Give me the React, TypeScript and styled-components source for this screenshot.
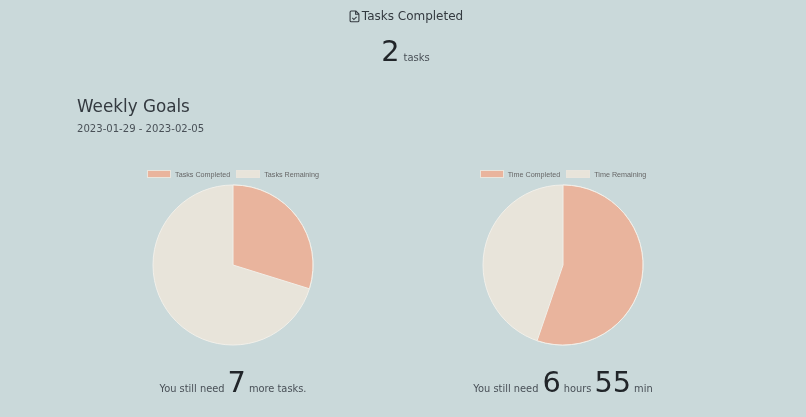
import styled, { createGlobalStyle } from "styled-components";

const GlobalStyle = createGlobalStyle`
    html, body {
        margin: 0;
        padding: 0;
        height: 100%;
        background-color: #cad9da;
    }
    body {
        font-family: "DejaVu Sans", Verdana, sans-serif;
        color: #212529;
        overflow: hidden;
    }
`;

const Page = styled.div`
    width: 806px;
    height: 417px;
    overflow: hidden;
    filter: blur(0.3px);
`;

const Completed = styled.section`
    display: flex;
    flex-direction: column;
    align-items: center;
    padding-top: 8px;
`;

const CompletedTitle = styled.h2`
    display: flex;
    align-items: center;
    margin: 0;
    padding-left: 6px;
    height: 16px;
    font-size: 12px;
    font-weight: 400;
    line-height: 16px;
    color: #343a40;
`;

const TitleIcon = styled.svg`
    width: 11px;
    height: 13px;
    margin-right: 2px;
`;

const Amount = styled.div`
    display: flex;
    align-items: baseline;
    height: 38px;
    margin-top: 8px;
    padding-left: 5px;
`;

const BigNumber = styled.span<{ $left?: number; $right?: number }>`
    font-size: 28.8px;
    line-height: 38px;
    color: #212529;
    margin: 0 ${(props) => props.$right ?? 0}px 0 ${(props) => props.$left ?? 0}px;
`;

const Unit = styled.span`
    font-size: 10px;
    color: #495057;
    margin-left: 4px;
`;

const Goals = styled.section`
    padding: 24px 0 0 77px;
`;

const GoalsTitle = styled.h1`
    margin: 0;
    font-size: 16.8px;
    font-weight: 400;
    line-height: 24px;
    color: #343a40;
`;

const GoalsDates = styled.p`
    margin: 4px 0 0;
    font-size: 10.08px;
    line-height: 14px;
    color: #495057;
`;

const Charts = styled.section`
    display: grid;
    grid-template-columns: 330px 330px;
    margin: 33px 0 0 68px;
`;

const ChartColumn = styled.div`
    display: flex;
    flex-direction: column;
    align-items: center;
`;

const Legend = styled.div`
    display: flex;
    align-items: center;
    justify-content: center;
    gap: 6px;
    height: 10px;
    font-family: "Liberation Sans", Arial, sans-serif;
    font-size: 7.2px;
    color: #666;
`;

const LegendItem = styled.div`
    display: flex;
    align-items: center;
    gap: 4px;
`;

const Swatch = styled.span<{ $color: string }>`
    width: 24px;
    height: 8px;
    box-sizing: border-box;
    border: 1px solid #e9e5dd;
    background-color: ${(props) => props.$color};
`;

const Pie = styled.svg`
    display: block;
    width: 162px;
    height: 162px;
    margin-top: 5px;
`;

const Remaining = styled.div`
    display: flex;
    align-items: baseline;
    justify-content: center;
    height: 38px;
    margin-top: 17px;
    font-size: 9.85px;
    color: #495057;
`;

const PEACH = "#e9b49d";
const CREAM = "#e8e4da";

function PieChart({ percent }: { percent: number }) {
    // slice starts at 12 o'clock and goes clockwise, like the chart lib does
    const angle = percent * 2 * Math.PI;
    const x = 81 + 80 * Math.sin(angle);
    const y = 81 - 80 * Math.cos(angle);
    const large = percent > 0.5 ? 1 : 0;
    return (
        <Pie viewBox="0 0 162 162">
            <circle cx="81" cy="81" r="80" fill={CREAM} stroke="#f1efe9" />
            <path
                d={`M81 81 L81 1 A80 80 0 ${large} 1 ${x} ${y} Z`}
                fill={PEACH}
                stroke="#f1efe9"
            />
        </Pie>
    );
}

function App() {
    return (
        <Page>
            <GlobalStyle />
            <Completed>
                <CompletedTitle>
                    <TitleIcon viewBox="0 0 12 14" fill="none" stroke="#343a40" strokeWidth="1.2">
                        <path d="M2.5 1h5L10.8 4.3V11.5a1.3 1.3 0 0 1-1.3 1.3h-7a1.3 1.3 0 0 1-1.3-1.3V2.3A1.3 1.3 0 0 1 2.5 1z" />
                        <path d="M7.2 1v3.5h3.6" />
                        <path d="M3.6 8.6l1.7 1.7 3-3" />
                    </TitleIcon>
                    Tasks Completed
                </CompletedTitle>
                <Amount>
                    <BigNumber>2</BigNumber>
                    <Unit>tasks</Unit>
                </Amount>
            </Completed>
            <Goals>
                <GoalsTitle>Weekly Goals</GoalsTitle>
                <GoalsDates>2023-01-29 - 2023-02-05</GoalsDates>
            </Goals>
            <Charts>
                <ChartColumn>
                    <Legend>
                        <LegendItem>
                            <Swatch $color={PEACH} />
                            Tasks Completed
                        </LegendItem>
                        <LegendItem>
                            <Swatch $color={CREAM} />
                            Tasks Remaining
                        </LegendItem>
                    </Legend>
                    <PieChart percent={0.298} />
                    <Remaining>
                        You still need <BigNumber $left={3} $right={3}>7</BigNumber> more tasks.
                    </Remaining>
                </ChartColumn>
                <ChartColumn>
                    <Legend>
                        <LegendItem>
                            <Swatch $color={PEACH} />
                            Time Completed
                        </LegendItem>
                        <LegendItem>
                            <Swatch $color={CREAM} />
                            Time Remaining
                        </LegendItem>
                    </Legend>
                    <PieChart percent={0.5525} />
                    <Remaining>
                        You still need <BigNumber $left={4} $right={3}>6</BigNumber> hours{" "}
                        <BigNumber $left={3} $right={3}>55</BigNumber> min
                    </Remaining>
                </ChartColumn>
            </Charts>
        </Page>
    );
}

export default App;
